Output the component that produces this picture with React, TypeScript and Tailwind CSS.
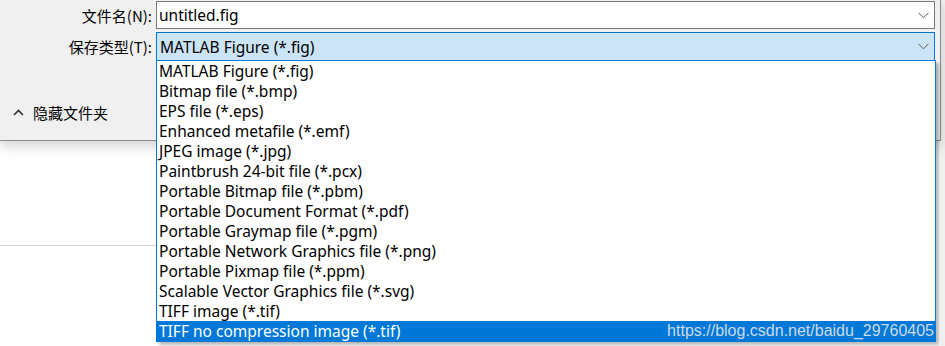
import React from 'react';

const fileTypes = [
  'MATLAB Figure (*.fig)',
  'Bitmap file (*.bmp)',
  'EPS file (*.eps)',
  'Enhanced metafile (*.emf)',
  'JPEG image (*.jpg)',
  'Paintbrush 24-bit file (*.pcx)',
  'Portable Bitmap file (*.pbm)',
  'Portable Document Format (*.pdf)',
  'Portable Graymap file (*.pgm)',
  'Portable Network Graphics file (*.png)',
  'Portable Pixmap file (*.ppm)',
  'Scalable Vector Graphics file (*.svg)',
  'TIFF image (*.tif)',
  'TIFF no compression image (*.tif)'
];

const uiFont = {
  fontFamily: '"Noto Sans", "Noto Sans CJK SC", sans-serif'
};

const cjkFont = {
  fontFamily: '"Noto Sans CJK SC", "Noto Sans", sans-serif'
};

function ChevronDown() {
  return (
    <svg width="11" height="7" viewBox="0 0 11 7" className="shrink-0">
      <path d="M0.5 0.8 L5.5 5.8 L10.5 0.8" fill="none" stroke="#555" strokeWidth="1" />
    </svg>
  );
}

function ChevronUp() {
  return (
    <svg width="11" height="7" viewBox="0 0 11 7">
      <path d="M1 6 L5.5 1.5 L10 6" fill="none" stroke="#333" strokeWidth="1.6" />
    </svg>
  );
}

export default function App() {
  return (
    <div
      className="relative flex h-[346px] w-[945px] overflow-hidden bg-white text-[15px] text-black"
      style={uiFont}
    >
      <div className="flex w-[941px] flex-col">
        {/* save dialog footer */}
        <div className="relative z-10 flex h-[141px] flex-col border-b border-r border-[#8c8c8c] bg-[#f0f0f0] shadow-[0_5px_12px_rgba(0,0,0,0.18)]">
          <div className="mt-[1px] flex h-[28px] items-center">
            <div className="w-[156px] pr-[4px] text-right leading-none" style={cjkFont}>
              文件名(N):
            </div>
            <div className="flex h-[28px] w-[779px] items-center justify-between border border-[#7a7a7a] bg-white pl-[2px] pr-[5px]">
              <span className="pt-[2px] text-[15.5px] leading-none">untitled.fig</span>
              <ChevronDown />
            </div>
          </div>
          <div className="mt-[3px] flex h-[29px] items-center">
            <div className="w-[156px] pr-[4px] text-right leading-none" style={cjkFont}>
              保存类型(T):
            </div>
            <div className="flex h-[29px] w-[779px] items-center justify-between border border-[#0078d7] bg-[#cce4f7] pl-[3px] pr-[5px]">
              <span className="pt-[2px] text-[15.5px] leading-none">MATLAB Figure (*.fig)</span>
              <ChevronDown />
            </div>
          </div>
          <div className="mt-[44px] flex items-center gap-[9px] pl-[13px]">
            <ChevronUp />
            <span className="leading-none" style={cjkFont}>隐藏文件夹</span>
          </div>
        </div>
        <div className="h-[104px]" />
        <div className="h-px w-[156px] bg-[#d2d2d2]" />
      </div>
      <div className="w-[4px] bg-[#f0f0f0]" />

      {/* open drop-down list */}
      <div className="absolute left-[156px] top-[60px] z-20 w-[780px] border border-[#0078d7] bg-white text-[15.5px] shadow-[3px_3px_3px_rgba(0,0,0,0.28)]">
        {fileTypes.map((t, i) => (
          <div
            key={t}
            className={
              i === fileTypes.length - 1
                ? 'flex h-[20px] items-center bg-[#0078d7] pl-[2px] pt-[2px] text-white'
                : 'flex h-[20px] items-center pl-[2px] pt-[2px]'
            }
          >
            <span className="leading-none">{t}</span>
          </div>
        ))}
        <span
          className="absolute bottom-[2px] right-[1px] text-[16px] leading-none text-[#ccdaea]"
          style={{ fontFamily: '"Liberation Sans", Arial, sans-serif' }}
        >
          https://blog.csdn.net/baidu_29760405
        </span>
      </div>
    </div>
  );
}
